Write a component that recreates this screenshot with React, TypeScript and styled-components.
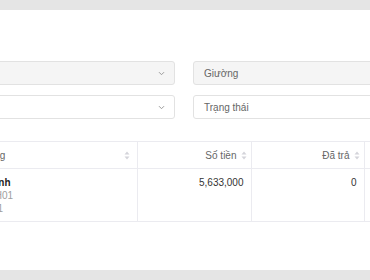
import React from 'react';
import styled, { createGlobalStyle } from 'styled-components';

const GlobalStyle = createGlobalStyle`
  html, body {
    margin: 0;
    padding: 0;
    background: #e5e5e5;
    font-family: "Liberation Sans", Arial, sans-serif;
  }
`;

const Page = styled.div`
  width: 370px;
  height: 280px;
  overflow: hidden;
  padding-top: 10px;
  box-sizing: border-box;
`;

const Card = styled.div`
  width: 520px;
  margin-left: -80px;
  background: #fff;
  padding: 51px 20px 48px;
  box-sizing: border-box;
`;

const Filters = styled.div`
  display: grid;
  grid-template-columns: 235px 235px;
  column-gap: 18px;
  row-gap: 10px;
`;

const Field = styled.div<{ $muted?: boolean }>`
  height: 24px;
  box-sizing: border-box;
  border: 1px solid #e2e2e2;
  border-radius: 3px;
  background: ${(p) => (p.$muted ? '#f5f5f5' : '#fff')};
  display: flex;
  align-items: center;
  justify-content: space-between;
  padding: 0 9px 0 10px;
  font-size: 10px;
  color: #666;
`;

const Chevron = () => (
  <svg width="7" height="5" viewBox="0 0 7 5">
    <path d="M1 1.2 L3.5 3.7 L6 1.2" fill="none" stroke="#9a9a9a" strokeWidth="1" />
  </svg>
);

const Table = styled.table`
  margin-top: 22px;
  border-collapse: collapse;
  table-layout: fixed;
  width: 520px;
  font-size: 10px;
`;

const Th = styled.th<{ $w: number; $right?: boolean }>`
  width: ${(p) => p.$w}px;
  height: 27px;
  box-sizing: border-box;
  padding: 0 4px 0 12px;
  font-weight: 400;
  color: #666;
  border-top: 1px solid #ebebf0;
  border-bottom: 1px solid #ebebf0;
  border-right: 1px solid #ebebf0;
  text-align: ${(p) => (p.$right ? 'right' : 'left')};
`;

const HeadInner = styled.div<{ $right?: boolean }>`
  display: flex;
  align-items: center;
  justify-content: ${(p) => (p.$right ? 'flex-end' : 'space-between')};
  gap: 4px;
  padding-right: ${(p) => (p.$right ? 0 : 3)}px;
`;

const Td = styled.td<{ $right?: boolean }>`
  height: 53px;
  box-sizing: border-box;
  vertical-align: top;
  padding: 7px 7px 0 12px;
  color: #333;
  line-height: 13px;
  border-bottom: 1px solid #ebebf0;
  border-right: 1px solid #ebebf0;
  text-align: ${(p) => (p.$right ? 'right' : 'left')};
`;

const Name = styled.div`
  color: #222;
  font-weight: 600;
`;

const Sub = styled.div`
  color: #a0a0a0;
`;

const SortIcon = () => (
  <svg width="6" height="9" viewBox="0 0 6 9">
    <path d="M3 0.5 L5.5 3.5 L0.5 3.5 Z" fill="#d4d4da" />
    <path d="M3 8.5 L5.5 5.5 L0.5 5.5 Z" fill="#d4d4da" />
  </svg>
);

const App = () => (
  <Page>
    <GlobalStyle />
    <Card>
      <Filters>
        <Field $muted>
          <span />
          <Chevron />
        </Field>
        <Field $muted>Giường</Field>
        <Field>
          <span />
          <Chevron />
        </Field>
        <Field>Trạng thái</Field>
      </Filters>
      <Table>
        <thead>
          <tr>
            <Th $w={197}>
              <HeadInner>
                <span>Khách hàng</span>
                <SortIcon />
              </HeadInner>
            </Th>
            <Th $w={114} $right>
              <HeadInner $right>
                <span>Số tiền</span>
                <SortIcon />
              </HeadInner>
            </Th>
            <Th $w={113} $right>
              <HeadInner $right>
                <span>Đã trả</span>
                <SortIcon />
              </HeadInner>
            </Th>
            <Th $w={96} $right>
              <HeadInner $right>
                <span>Còn lại</span>
                <SortIcon />
              </HeadInner>
            </Th>
          </tr>
        </thead>
        <tbody>
          <tr>
            <Td>
              <Name>Nguyễn Anh</Name>
              <Sub>Mã KH: PH01</Sub>
              <Sub>Phòng: 101</Sub>
            </Td>
            <Td $right>5,633,000</Td>
            <Td $right>0</Td>
            <Td $right>5,633,000</Td>
          </tr>
        </tbody>
      </Table>
    </Card>
  </Page>
);

export default App;
